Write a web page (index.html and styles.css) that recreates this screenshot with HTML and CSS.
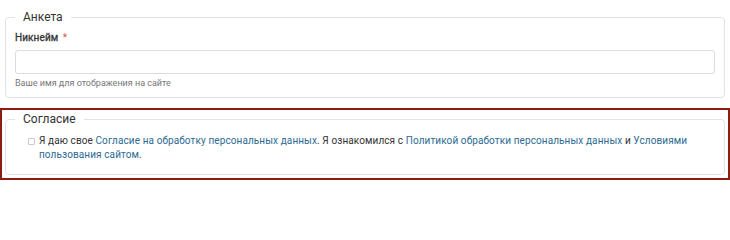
FILE: index.html
```html
<!DOCTYPE html>
<html lang="ru">
<head>
<meta charset="utf-8">
<link rel="stylesheet" href="styles.css">
</head>
<body>
<div class="page">
  <fieldset class="group">
    <legend class="group-title">Анкета</legend>
    <div class="field">
      <label class="field-label" for="nick">Никнейм <span class="req">*</span></label>
      <input class="field-input" id="nick" type="text">
      <div class="field-help">Ваше имя для отображения на сайте</div>
    </div>
  </fieldset>
  <div class="highlight">
    <fieldset class="group group-consent">
      <legend class="group-title">Согласие</legend>
      <label class="check">
        <span class="check-box"></span>
        <span class="check-text">Я даю свое <a href="#">Согласие на обработку персональных данных</a>. Я ознакомился с <a href="#">Политикой обработки персональных данных</a> и <a href="#">Условиями пользования сайтом</a>.</span>
      </label>
    </fieldset>
  </div>
</div>
</body>
</html>
```

FILE: styles.css
```css
* { box-sizing: border-box; }
html, body { margin: 0; padding: 0; background: #fff; }
body {
  font-family: Roboto, "Liberation Sans", Arial, sans-serif;
  color: #333;
  width: 730px;
}
.page { padding-top: 9px; }
.group {
  margin: 0 5px;
  border: 1px solid #e3e3e3;
  border-radius: 4px;
  padding: 0 9px 8px;
  min-width: 0;
}
.group-title {
  padding: 0 8px;
  font-size: 12px;
  line-height: 16px;
  color: #333;
}
.field { padding-top: 6px; }
.field-label {
  display: block;
  font-size: 10px;
  line-height: 14px;
  font-weight: 400;
  letter-spacing: 0.1px;
  -webkit-text-stroke: 0.3px #333;
  color: #333;
}
.req { color: #d9534f; margin-left: 2px; -webkit-text-stroke: 0; }
.field-input {
  display: block;
  margin-top: 5px;
  width: 100%;
  height: 24px;
  border: 1px solid #dcdcdc;
  border-radius: 3px;
  background: #fff;
  outline: none;
  font: inherit;
}
.field-help {
  margin-top: 3px;
  font-size: 9px;
  line-height: 12px;
  color: #777;
}
.highlight {
  margin-top: 10px;
  border: 2px solid #8d1c13;
  padding: 1px 3px 3px;
}
.highlight .group { margin: 0; padding-bottom: 12px; }
.check {
  display: flex;
  align-items: flex-start;
  gap: 4px;
  padding: 7px 0 0 13px;
  font-size: 10px;
  line-height: 14px;
  letter-spacing: 0.1px;
  color: #333;
}
.check-box {
  flex: none;
  width: 7px;
  height: 7px;
  margin-top: 4px;
  border: 1px solid #c8c8c8;
  border-radius: 1px;
  background: #fff;
}
.check-text a { color: #2c6a93; text-decoration: none; }
```
